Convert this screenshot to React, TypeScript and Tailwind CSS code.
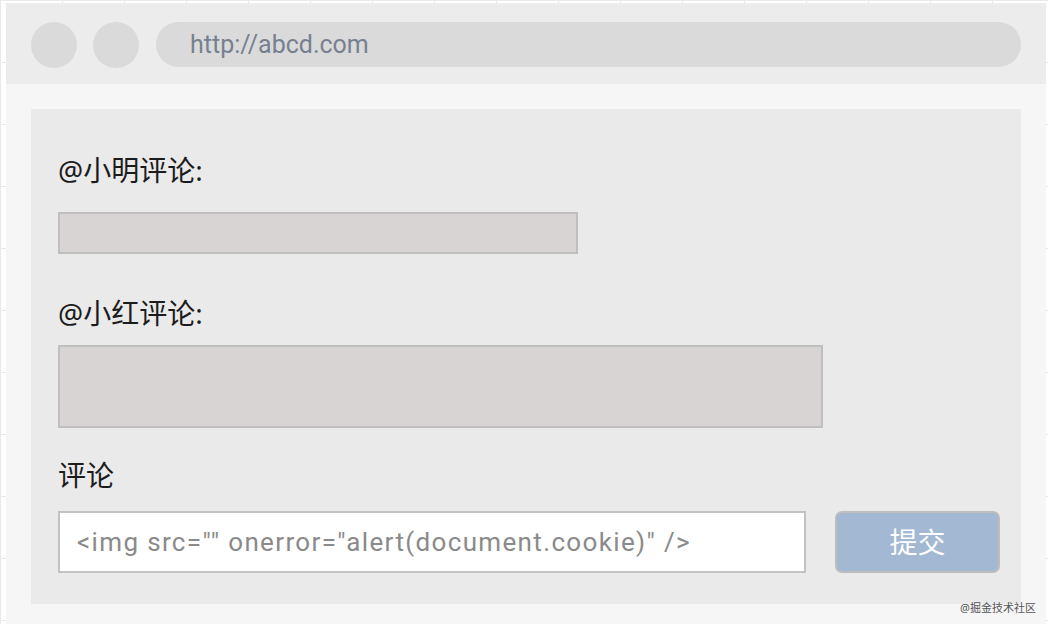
const cjk = "font-['Noto_Sans','Noto_Sans_CJK_SC',sans-serif]"

const Label = ({ text, className }: { text: string; className?: string }) => (
  <div className={`${cjk} text-[28px] leading-[36px] text-[#1c1c1c] ${className ?? ""}`}>{text}</div>
)

export default function App() {
  return (
    <div className="relative h-[624px] w-[1048px] overflow-hidden bg-white bg-[linear-gradient(#e9e9e9_1px,transparent_1px),linear-gradient(90deg,#e9e9e9_1px,transparent_1px)] bg-[size:62px_62px] pl-[6px] pr-[2px] pt-[3px]">
      <div className="flex h-full flex-col">
        {/* browser bar */}
        <div className="flex h-[81px] items-start gap-[16px] bg-[#ececec] px-[25px] pt-[19px]">
          <div className="h-[46px] w-[46px] shrink-0 rounded-full bg-[#dadada]" />
          <div className="h-[46px] w-[46px] shrink-0 rounded-full bg-[#dadada]" />
          <div className="ml-[1px] flex h-[45px] flex-1 items-center rounded-full bg-[#dadada] pl-[34px]">
            <span className="font-['Roboto',sans-serif] text-[25px] text-[#778090]">http://abcd.com</span>
          </div>
        </div>

        {/* page body */}
        <div className="flex-1 bg-[#f6f6f6] px-[25px] pt-[25px]">
          <div className="flex h-[495px] flex-col bg-[#eaeaea] pl-[27px] pr-[21px] pt-[43px]">
            <Label text="@小明评论:" />
            <div className="mt-[24px] h-[42px] w-[520px] border-2 border-[#bfbfbf] bg-[#d8d4d3]" />

            <Label text="@小红评论:" className="mt-[41px]" />
            <div className="mt-[14px] h-[83px] w-[765px] border-2 border-[#bfbfbf] bg-[#d8d4d3]" />

            <Label text="评论" className="mt-[29px]" />
            <div className="mt-[18px] flex gap-[29px]">
              <div className="flex h-[62px] w-[748px] items-center border-2 border-[#c2c2c2] bg-white pl-[17px]">
                <span className="font-['Roboto',sans-serif] text-[26px] tracking-[1.35px] text-[#8a8a8a]">
                  {'<img src="" onerror="alert(document.cookie)" />'}
                </span>
              </div>
              <button className="flex h-[62px] w-[165px] items-center justify-center rounded-[7px] border-2 border-[#bdbdbd] bg-[#a3b8d3]">
                <span className={`${cjk} text-[28px] text-white`}>提交</span>
              </button>
            </div>
          </div>
        </div>
      </div>

      <div className={`absolute bottom-[11px] right-[12px] ${cjk} text-[11px] leading-none text-[#555]`}>@掘金技术社区</div>
    </div>
  )
}
